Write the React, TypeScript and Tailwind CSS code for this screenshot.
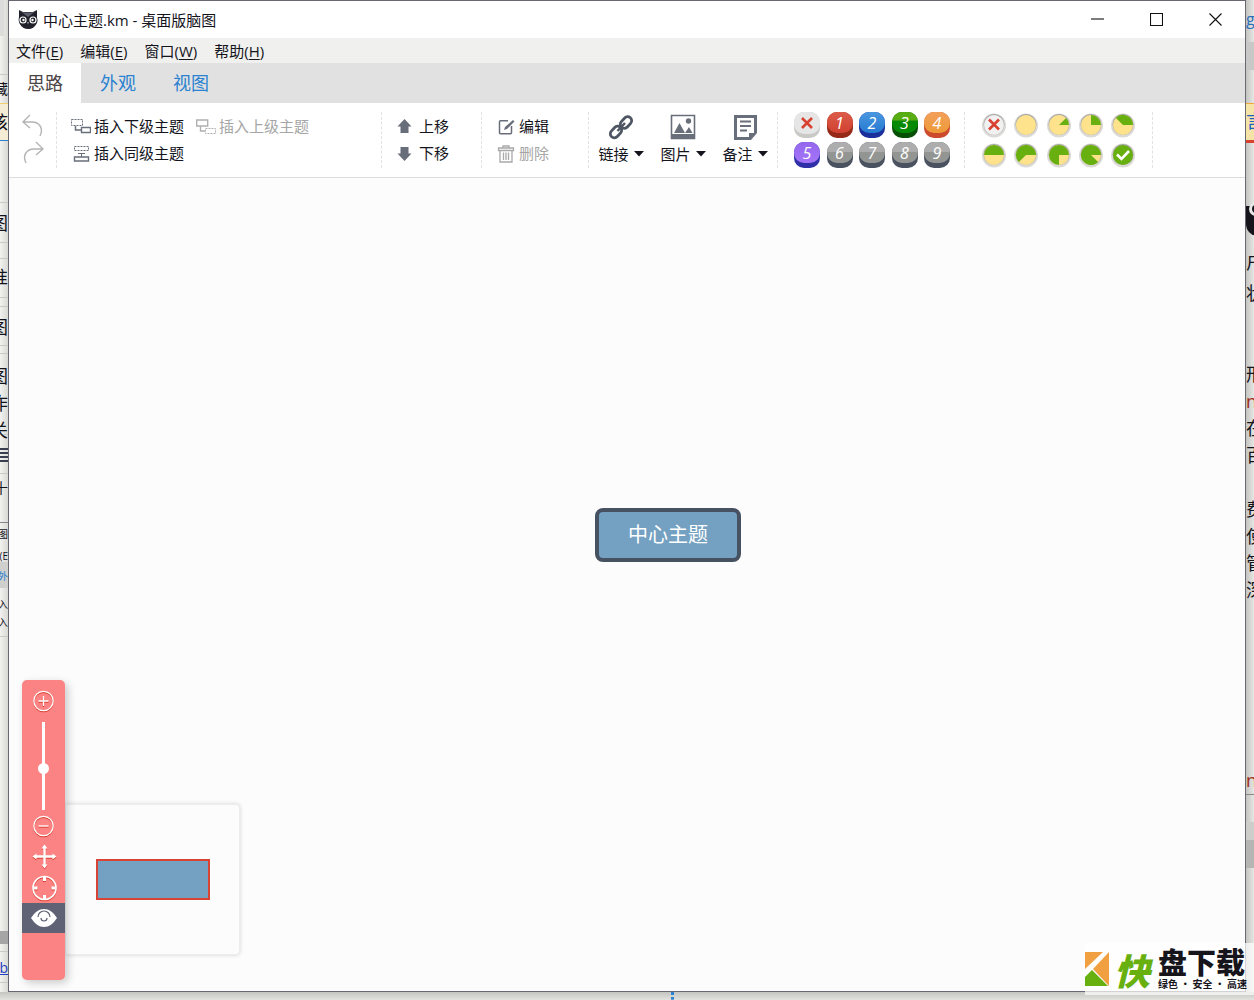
import { useState } from 'react'
import type { ReactNode } from 'react'
import { clsx } from 'clsx'

const MENUS = [
  { label: '文件', key: 'E' },
  { label: '编辑', key: 'E' },
  { label: '窗口', key: 'W' },
  { label: '帮助', key: 'H' },
]

const TABS = ['思路', '外观', '视图']

const PRIORITIES = [
  { value: 1, base: 'bg-[#942a17]', face: 'bg-linear-to-b from-[#dd5c4a] to-[#d04030]' },
  { value: 2, base: 'bg-[#1b2f9a]', face: 'bg-linear-to-b from-[#4b98e0] to-[#2479d0]' },
  { value: 3, base: 'bg-[#065006]', face: 'bg-linear-to-b from-[#58ad12] from-35% to-[#068a06] to-45%' },
  { value: 4, base: 'bg-[#cb4b2c]', face: 'bg-linear-to-b from-[#f2a05a] to-[#ee9a36]' },
  { value: 5, base: 'bg-[#3030a8]', face: 'bg-linear-to-b from-[#9468ee] to-[#a574f8]' },
  { value: 6, base: 'bg-[#4a5260]', face: 'bg-linear-to-b from-[#adadad] from-45% to-[#939593] to-50%' },
  { value: 7, base: 'bg-[#4a5260]', face: 'bg-linear-to-b from-[#adadad] from-45% to-[#939593] to-50%' },
  { value: 8, base: 'bg-[#4a5260]', face: 'bg-linear-to-b from-[#adadad] from-45% to-[#939593] to-50%' },
  { value: 9, base: 'bg-[#4a5260]', face: 'bg-linear-to-b from-[#adadad] from-45% to-[#939593] to-50%' },
]

interface Scrap {
  text: string
  top: number
  style: string
}

// Pieces of the page behind the window, visible on both sides of it
const LEFT_SCRAPS: Scrap[] = [
  { text: '藏', top: 79, style: 'text-sm' },
  { text: '核', top: 112, style: 'text-lg' },
  { text: '图', top: 213, style: 'text-lg' },
  { text: '准', top: 267, style: 'text-lg' },
  { text: '图', top: 317, style: 'text-lg' },
  { text: '图', top: 366, style: 'text-lg' },
  { text: '作', top: 393, style: 'text-lg' },
  { text: '关', top: 420, style: 'text-lg' },
  { text: '十', top: 478, style: 'text-sm' },
  { text: '图', top: 524, style: 'text-[10px]' },
  { text: '辑(E', top: 546, style: 'text-[10px]' },
  { text: '外', top: 566, style: 'text-[10px] text-[#2a82d0]' },
  { text: '插入', top: 594, style: 'text-[10px]' },
  { text: '插入', top: 612, style: 'text-[10px]' },
  { text: 'b', top: 958, style: 'text-sm text-[#2040c0] underline' },
]

const RIGHT_SCRAPS: Scrap[] = [
  { text: 'g', top: 9, style: 'text-base text-[#2a6fb8]' },
  { text: '言', top: 111, style: 'text-lg text-[#2060c0]' },
  { text: '户', top: 252, style: 'text-lg' },
  { text: '状', top: 283, style: 'text-lg' },
  { text: '形', top: 364, style: 'text-lg' },
  { text: 'n', top: 391, style: 'text-lg text-[#a03020]' },
  { text: '在', top: 418, style: 'text-lg' },
  { text: '百', top: 445, style: 'text-lg' },
  { text: '费', top: 499, style: 'text-lg' },
  { text: '使', top: 526, style: 'text-lg' },
  { text: '管', top: 553, style: 'text-lg' },
  { text: '深', top: 580, style: 'text-lg' },
  { text: 'n', top: 770, style: 'text-lg text-[#a03020]' },
]

const LEFT_RULES = [74, 202, 242, 258, 297, 306, 345, 353, 434, 473, 636, 951, 982]

export default function App() {
  return (
    <div className="flex min-h-screen flex-col bg-[#deddda] font-['Open_Sans','Noto_Sans_CJK_SC',sans-serif] text-[15px] text-[#14141c]">
      <div className="flex flex-1">
        <LeftEdge />
        <main className="flex min-w-0 flex-1 flex-col border border-[#686870] bg-white">
          <TitleBar />
          <MenuBar />
          <Ribbon />
          <Canvas />
        </main>
        <RightEdge />
      </div>
      <div className="flex h-2 justify-center bg-linear-to-b from-[#c4c4c0] to-[#e2e2df]">
        <span className="ml-[90px] h-2 border-l-3 border-dotted border-[#2a82d0]" />
      </div>
      <Watermark />
    </div>
  )
}

function LeftEdge() {
  return (
    <aside aria-hidden="true" className="relative w-2 shrink-0 overflow-hidden bg-linear-to-r from-[#f2f2f0] to-[#d8d8d4]">
      <div className="absolute top-0 h-9 w-1 bg-[#dcdcda]" />
      <div className="absolute top-[103px] h-[38px] w-2 border-t border-b border-t-[#f4cf70] border-b-[#2a82d0] bg-[#f5ecd6]" />
      <div className="absolute top-[448px] h-[6px] w-2 border-y-2 border-[#3a3f50]" />
      <div className="absolute top-[456px] h-[6px] w-2 border-y-2 border-[#3a3f50]" />
      <div className="absolute top-[522px] h-px w-2 bg-[#85878d]" />
      <div className="absolute top-[562px] h-[26px] w-2 bg-[#cfcfcd]" />
      <div className="absolute top-[931px] h-[13px] w-2 bg-[#a5a5a5]" />
      {LEFT_RULES.map((top) => (
        <div key={top} className="absolute h-px w-2 bg-[#c9c9c7]" style={{ top }} />
      ))}
      {LEFT_SCRAPS.map((scrap) => (
        <span
          key={scrap.top}
          className={clsx('absolute right-0 leading-5 whitespace-nowrap', scrap.style)}
          style={{ top: scrap.top }}
        >
          {scrap.text}
        </span>
      ))}
    </aside>
  )
}

function RightEdge() {
  return (
    <aside aria-hidden="true" className="relative w-2 shrink-0 overflow-hidden bg-linear-to-r from-[#c4c4c1] to-[#e6e6e4]">
      <div className="absolute top-[42px] h-7 w-2 bg-[#c8c8c6]" />
      <div className="absolute top-[103px] h-[37px] w-2 border-t border-[#f0a83c] bg-[#f5e3a8]" />
      <div className="absolute top-[140px] h-[3px] w-2 bg-[#d8432f]" />
      <div className="absolute top-[206px] left-0 h-[30px] w-3 rounded-bl-xl bg-[#17151c]" />
      <div className="absolute top-[202px] left-[3px] size-[14px] rounded-full border-3 border-[#e8e8e6] bg-[#17151c]" />
      <div className="absolute top-[822px] h-[46px] w-2 bg-[#cdcdca]" />
      <div className="absolute top-[840px] h-7 w-2 bg-[#b5b5b3]" />
      <div className="absolute top-[794px] h-px w-2 bg-[#888]" />
      {RIGHT_SCRAPS.map((scrap) => (
        <span
          key={scrap.top}
          className={clsx('absolute left-0 leading-5 whitespace-nowrap', scrap.style)}
          style={{ top: scrap.top }}
        >
          {scrap.text}
        </span>
      ))}
    </aside>
  )
}

function TitleBar() {
  return (
    <header className="flex h-[37px] items-center bg-white pl-[9px]">
      <OwlLogo />
      <h1 className="ml-[5px] flex-1 text-[15px] leading-5">中心主题.km - 桌面版脑图</h1>
      <WindowButton label="最小化">
        <path d="M0 6h13" />
      </WindowButton>
      <WindowButton label="最大化">
        <path d="M.5 .5h12v12h-12z" />
      </WindowButton>
      <WindowButton label="关闭">
        <path d="M.5 .5l12 12M12.500 .5l-12 12" />
      </WindowButton>
    </header>
  )
}

function WindowButton({ label, children }: { label: string; children: ReactNode }) {
  return (
    <button type="button" aria-label={label} className="flex h-full w-[59px] items-center justify-center">
      <svg className="size-[13px]" viewBox="0 0 13 13" fill="none" stroke="#111" strokeWidth={1.1}>
        {children}
      </svg>
    </button>
  )
}

function OwlLogo() {
  return (
    <svg className="h-5 w-5" viewBox="0 0 20 20">
      <path d="M1 0l4 2h10l4-2v8c1 2 .6 4-.6 6-1.6 3-4.4 5-8 5-4 0-7-2-8.600-5C.6 12 .4 9 1 7z" fill="#20212b" />
      <path d="M3 1.500l7 5.500 7-5.500-3 1H6z" fill="#5b5f6c" />
      <circle cx="5" cy="10" r="3.600" fill="#fff" />
      <circle cx="15" cy="10" r="3.600" fill="#fff" />
      <circle cx="5" cy="10" r="2.400" fill="#20212b" />
      <circle cx="15" cy="10" r="2.400" fill="#20212b" />
      <circle cx="5.500" cy="10" r="1.200" fill="#fff" />
      <circle cx="14.500" cy="10" r="1.200" fill="#fff" />
      <path d="M9 12h2l-1 2.500z" fill="#9a9ca5" />
    </svg>
  )
}

function MenuBar() {
  return (
    <nav className="flex h-[25px] items-center gap-[17px] bg-[#f0f0ee] px-[7px]">
      {MENUS.map((menu) => (
        <button key={menu.label} type="button" className="leading-5">
          {menu.label}(<span className="underline underline-offset-2">{menu.key}</span>)
        </button>
      ))}
    </nav>
  )
}

function Ribbon() {
  const [tab, setTab] = useState(TABS[0])

  return (
    <>
      <div role="tablist" className="flex h-10 gap-px bg-[#e1e1e1]">
        {TABS.map((name) => (
          <button
            key={name}
            type="button"
            role="tab"
            aria-selected={tab === name}
            onClick={() => setTab(name)}
            className={clsx(
              'px-[18px] text-lg leading-6',
              tab === name ? 'bg-white text-[#4c4444]' : 'text-[#2a82d0]'
            )}
          >
            {name}
          </button>
        ))}
      </div>
      <div className="flex overflow-hidden border-b border-[#dcdcdc] bg-white py-[9px]">
        <Group className="w-12 flex-col items-center justify-between pt-[2px] pb-1">
          <button type="button" aria-label="撤销">
            <svg className="h-[23px] w-[22px]" viewBox="0 0 22 23" fill="none" stroke="#b4b4b4" strokeWidth={1.4}>
              <path d="M8 1L1 8l7 6M1 8h9c7 0 12 6 8 14" />
            </svg>
          </button>
          <button type="button" aria-label="重做">
            <svg className="h-[23px] w-[22px]" viewBox="0 0 22 23" fill="none" stroke="#b4b4b4" strokeWidth={1.4}>
              <path d="M14 1l7 7-7 6M21 8h-9C5 8 0 14 4 22" />
            </svg>
          </button>
        </Group>
        <Group className="w-[325px] items-center pl-[14px]">
          <div className="grid grid-cols-2 gap-x-3">
            <ToolButton label="插入下级主题" icon={<ChildIcon />} />
            <ToolButton label="插入上级主题" icon={<ParentIcon />} disabled />
            <ToolButton label="插入同级主题" icon={<SiblingIcon />} />
          </div>
        </Group>
        <Group className="w-[100px] flex-col justify-center pl-[14px]">
          <ToolButton
            label="上移"
            icon={
              <svg className="h-4 w-5" viewBox="0 0 20 16" fill="#686e7a">
                <path d="M8.500 0l7 7.500h-3V14h-8V7.500h-3z" />
              </svg>
            }
          />
          <ToolButton
            label="下移"
            icon={
              <svg className="h-4 w-5" viewBox="0 0 20 16" fill="#686e7a">
                <path d="M8.500 15l7-7.500h-3V1h-8v6.500h-3z" />
              </svg>
            }
          />
        </Group>
        <Group className="w-[107px] flex-col justify-center pl-[14px]">
          <ToolButton
            label="编辑"
            icon={
              <svg className="h-4 w-5" viewBox="0 0 20 16" fill="none" stroke="#686e7a" strokeWidth={1.5}>
                <path d="M12 1.800H4.500q-1 0-1 1v11q0 1 1 1h10q1 0 1-1V7" />
                <path d="M8 11l1-3 8-7 1.500 1.500-7.500 7.500z" fill="#686e7a" stroke="none" />
              </svg>
            }
          />
          <ToolButton
            label="删除"
            disabled
            icon={
              <svg className="h-[18px] w-5" viewBox="0 0 20 18" fill="none" stroke="#a9a9a9" strokeWidth={1.3}>
                <path d="M2.500 3h15v2.500h-15zM7 3V1h6v2M4 5.500V17h12V5.500M7.500 7.500v7.500M10 7.500v7.500M12.500 7.500v7.500" />
              </svg>
            }
          />
        </Group>
        <Group className="w-[189px] justify-between px-[9px] pt-[2px]">
          <DropButton label="链接">
            <g fill="none" stroke="#4e5664" strokeWidth={2.8}>
              <rect x="-6.500" y="-4" width="13" height="8" rx="4" transform="translate(8 18) rotate(-48)" />
              <rect x="-6.500" y="-4" width="13" height="8" rx="4" transform="translate(18 8.500) rotate(-48)" />
              <path d="M9.500 17l7.500-8" strokeWidth={2.5} />
            </g>
          </DropButton>
          <DropButton label="图片">
            <path d="M1.500 1.500h23v23h-23z" fill="#fff" stroke="#686e7a" strokeWidth={1.6} />
            <path d="M1 20h24v5H1zM4 19l5.500-10L15 19zM15 19l4-6 3.500 6z" fill="#686e7a" />
            <circle cx="18.500" cy="7" r="2.700" fill="#686e7a" />
          </DropButton>
          <DropButton label="备注">
            <path d="M2 1h23v18l-6 7H2z" fill="#686e7a" />
            <path d="M5 4h17v15h-5v4H5z" fill="#fff" />
            <path d="M8 7.500h11M8 12h11M8 16.500h7" stroke="#686e7a" strokeWidth={2} />
          </DropButton>
        </Group>
        <Group className="w-[187px] pr-[14px] pl-4">
          <BadgeGrid>
            <button
              type="button"
              aria-label="移除优先级"
              className="flex h-[26px] flex-col justify-start rounded-[10px] bg-[#c9c9c7]"
            >
              <span className="flex h-[22px] w-full items-center justify-center rounded-[10px] bg-[#e6e6e6]">
                <CrossIcon />
              </span>
            </button>
            {PRIORITIES.map((item) => (
              <PriorityButton key={item.value} {...item} />
            ))}
          </BadgeGrid>
        </Group>
        <Group className="w-[188px] px-4">
          <BadgeGrid>
            {[0, 1, 2, 3, 4, 5, 6, 7, 8, 9].map((step) => (
              <ProgressButton key={step} step={step} />
            ))}
          </BadgeGrid>
        </Group>
      </div>
    </>
  )
}

function Group({ className, children }: { className: string; children: ReactNode }) {
  return (
    <div className={clsx('flex h-14 shrink-0 border-r border-dashed border-[#e2e2e2]', className)}>
      {children}
    </div>
  )
}

function BadgeGrid({ children }: { children: ReactNode }) {
  return (
    <div className="grid w-full grid-cols-[repeat(5,26px)] content-between justify-between">{children}</div>
  )
}

interface ToolButtonProps {
  label: string
  icon: ReactNode
  disabled?: boolean
}

function ToolButton({ label, icon, disabled }: ToolButtonProps) {
  return (
    <button
      type="button"
      disabled={disabled}
      className={clsx('flex h-[27px] items-center gap-[3px] whitespace-nowrap', disabled && 'text-[#a6a6a6]')}
    >
      {icon}
      {label}
    </button>
  )
}

function DropButton({ label, children }: { label: string; children: ReactNode }) {
  return (
    <button type="button" className="flex w-[46px] flex-col items-center">
      <svg className="size-[26px]" viewBox="0 0 26 26">
        {children}
      </svg>
      <span className="flex items-center gap-[5px] leading-7">
        {label}
        <svg className="h-[6px] w-[10px]" viewBox="0 0 10 6">
          <path d="M0 0h10L5 5.500z" fill="#14141c" />
        </svg>
      </span>
    </button>
  )
}

function PriorityButton({ value, base, face }: { value: number; base: string; face: string }) {
  return (
    <button
      type="button"
      aria-label={`优先级 ${value}`}
      className={clsx('flex h-[26px] flex-col justify-start rounded-[10px]', base)}
    >
      <span
        className={clsx(
          'flex h-[21px] w-full items-center justify-center rounded-[10px] text-base leading-5 text-white italic',
          face
        )}
      >
        {value}
      </span>
    </button>
  )
}

/**
 * Progress badge: step 0 clears, 1 is empty, 2-8 fill counter-clockwise by eighths, 9 is done
 */
function ProgressButton({ step }: { step: number }) {
  const angle = ((step - 1) * Math.PI) / 4
  const x = 13 + 10 * Math.cos(angle)
  const y = 13 - 10 * Math.sin(angle)
  const large = step > 5 ? 1 : 0

  return (
    <button type="button" aria-label={`进度 ${step}`} className="h-[26px] w-[26px]">
      <svg className="size-[26px]" viewBox="0 0 26 26">
        <circle cx="13" cy="13.500" r="12" fill="#dcdad6" />
        <circle cx="13" cy="12.500" r="10.500" fill="#a5a5a5" />
        <circle cx="13" cy="13" r="10" fill={step === 0 ? '#f1f1f1' : step === 9 ? '#68b010' : '#ffe38c'} />
        {step > 1 && step < 9 && (
          <path d={`M13 13H23A10 10 0 ${large} 0 ${x} ${y}Z`} fill="#68b010" />
        )}
        {step === 0 && <path d="M8 7.500l10 10M18 7.500l-10 10" stroke="#d84030" strokeWidth={2.6} />}
        {step === 9 && <path d="M7 12.500l4.500 4.500 7.500-8" fill="none" stroke="#fff" strokeWidth={2.6} />}
      </svg>
    </button>
  )
}

function CrossIcon() {
  return (
    <svg className="size-3" viewBox="0 0 12 12" stroke="#d84030" strokeWidth={2.6}>
      <path d="M1 1l10 10M11 1L1 11" />
    </svg>
  )
}

function ChildIcon() {
  return (
    <svg className="h-4 w-5" viewBox="0 0 20 16" fill="none" stroke="#686e7a">
      <path d="M.5 .5h11v6h-11z" strokeDasharray="2 1" />
      <path d="M4.500 7v4H10" strokeWidth={1.5} />
      <path d="M10.500 8.500h9v5h-9z" strokeWidth={1.4} />
    </svg>
  )
}

function ParentIcon() {
  return (
    <svg className="h-4 w-5" viewBox="0 0 20 16" fill="none" stroke="#b0b0b0">
      <path d="M.7 1h11v6H.7z" strokeWidth={1.4} />
      <path d="M4.500 7v5H9" strokeWidth={1.4} />
      <path d="M9.500 9.500h10v5h-10z" strokeDasharray="2 1" />
    </svg>
  )
}

function SiblingIcon() {
  return (
    <svg className="h-4 w-5" viewBox="0 0 20 16" fill="none" stroke="#686e7a">
      <path d="M3.500 .5h14v4h-14z" strokeDasharray="2 1" />
      <path d="M10.500 7v4M7 7.500h7" />
      <path d="M3.500 11h14v4h-14z" strokeWidth={1.4} />
    </svg>
  )
}

function Canvas() {
  return (
    <section className="relative min-h-[600px] flex-1 overflow-hidden bg-[#fcfcfc]">
      <button
        type="button"
        className="absolute top-[330px] left-[586px] rounded-lg border-4 border-[#465261] bg-[#74a1c1] px-[29px] py-2 text-xl leading-[30px] text-white"
      >
        中心主题
      </button>
      <Navigator />
    </section>
  )
}

function Navigator() {
  const [zoom, setZoom] = useState(53)

  return (
    <div className="absolute bottom-[11px] left-[13px] flex items-end">
      <div className="z-10 flex h-[300px] w-[43px] flex-col items-center rounded-[5px] bg-[#fc8383] pt-[10px] shadow-[3px_3px_8px_rgba(0,0,0,0.2)]">
        <button type="button" aria-label="放大">
          <NavIcon>
            <circle cx="11.500" cy="11" r="9.700" />
            <path d="M6.500 11h10M11.500 6v10" />
          </NavIcon>
        </button>
        <input
          type="range"
          aria-label="缩放"
          min={0}
          max={100}
          value={zoom}
          onChange={(e) => setZoom(Number(e.target.value))}
          className="mt-[10px] mb-[5px] h-[88px] w-[11px] shrink-0 appearance-none bg-[linear-gradient(white,white)] bg-[length:3px_100%] bg-center bg-no-repeat [writing-mode:vertical-lr] [&::-webkit-slider-thumb]:size-[11px] [&::-webkit-slider-thumb]:appearance-none [&::-webkit-slider-thumb]:rounded-full [&::-webkit-slider-thumb]:bg-white"
        />
        <button type="button" aria-label="缩小">
          <NavIcon>
            <circle cx="11.500" cy="11" r="9.700" />
            <path d="M6.500 11h10" />
          </NavIcon>
        </button>
        <button type="button" aria-label="拖动" className="mt-[6px]">
          <svg className="h-[27px] w-[26px] drop-shadow-[0_1px_0_#d84030]" viewBox="0 0 26 26" fill="#fff" stroke="#fff">
            <path d="M13.500 3v20M3.500 13h20" strokeWidth={2.4} />
            <path d="M13.500 1l3 4h-6zM13.500 25l3-4h-6zM1.500 13l4-3v6zM25.500 13l-4-3v6z" stroke="none" />
          </svg>
        </button>
        <button type="button" aria-label="定位根节点" className="mt-[5px]">
          <svg className="size-[26px] drop-shadow-[0_1px_0_#d84030]" viewBox="0 0 26 26" fill="none" stroke="#fff">
            <circle cx="13.500" cy="13" r="11.500" strokeWidth={1.7} />
            <path d="M13.500 2v4M13.500 20v4M2.500 13h4M20.500 13h4" strokeWidth={3} />
          </svg>
        </button>
        <button
          type="button"
          aria-label="导航器"
          className="mt-[2px] flex h-[30px] w-full items-center justify-center bg-[#5e6274]"
        >
          <svg className="h-[18px] w-[26px]" viewBox="0 0 26 18">
            <path d="M0 9C4 3 8 0 13 0s9 3 13 9c-4 6-8 9-13 9S4 15 0 9z" fill="#fff" />
            <path d="M7 8a6 6 0 0 1 12 0" fill="none" stroke="#5e6274" strokeWidth={1.2} />
            <path d="M10 9a3 3 0 0 0 6 0" fill="none" stroke="#5e6274" strokeWidth={1.2} />
          </svg>
        </button>
      </div>
      <div className="mb-[25px] flex h-[151px] w-[175px] items-center justify-center rounded-r-sm border border-[#ededed] bg-[#fcfcfc] shadow-[0_0_4px_rgba(0,0,0,0.16)]">
        <div className="h-[41px] w-[114px] border-2 border-[#d84333] bg-[#74a1c1]" />
      </div>
    </div>
  )
}

function NavIcon({ children }: { children: ReactNode }) {
  return (
    <svg
      className="h-[22px] w-6 drop-shadow-[0_1px_0_#d84030]"
      viewBox="0 0 24 22"
      fill="none"
      stroke="#fff"
      strokeWidth={1.3}
    >
      {children}
    </svg>
  )
}

function Watermark() {
  return (
    <div className="absolute right-0 bottom-[5px] flex h-[52px] items-center bg-white/70 pr-[7px] font-['Noto_Sans_CJK_SC',sans-serif] font-black">
      <svg className="h-[34px] w-6" viewBox="0 0 24 34">
        <path d="M0 0h18L0 17zM24 0v34L8 17z" fill="#f0a040" />
        <path d="M7 18l16 16H0V25z" fill="#68b010" />
      </svg>
      <span className="ml-[5px] text-4xl leading-9 text-[#68b010] italic">快</span>
      <span className="ml-2 flex flex-col text-[#17151c]">
        <span className="text-[29px] leading-[26px]">盘下载</span>
        <span className="mt-1 text-[10px] leading-3 font-bold">绿色 · 安全 · 高速</span>
      </span>
    </div>
  )
}
